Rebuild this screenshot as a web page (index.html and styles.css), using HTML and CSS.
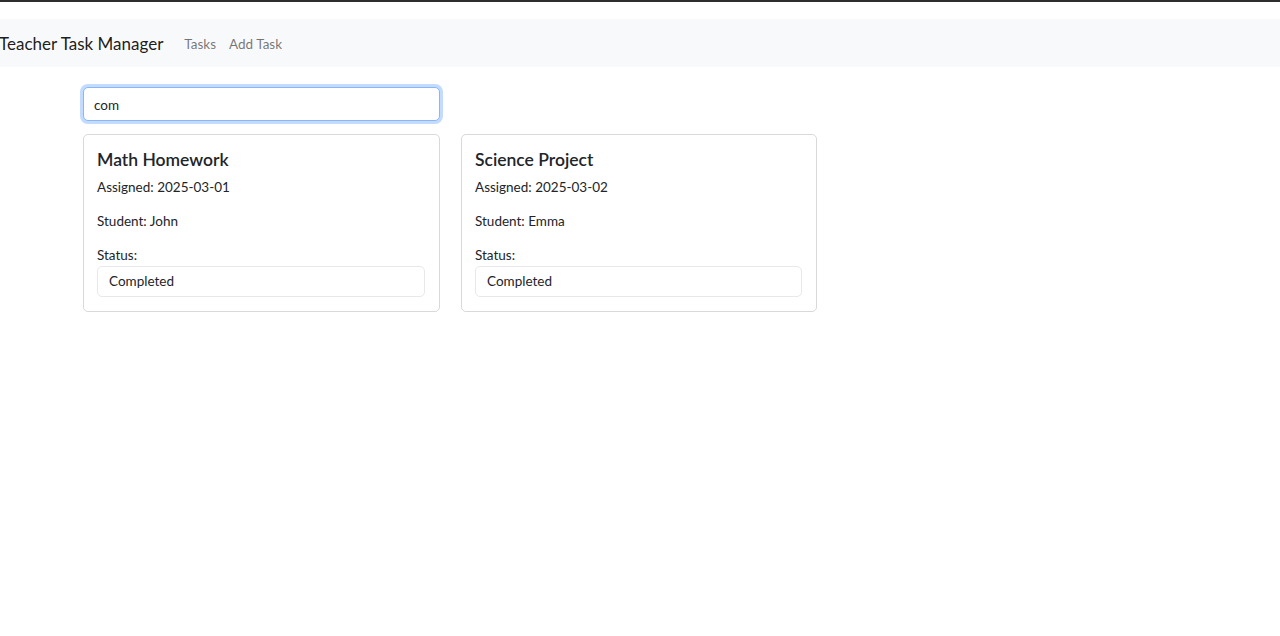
FILE: index.html
```html
<!DOCTYPE html>
<html lang="en">
<head>
<meta charset="utf-8">
<title>Teacher Task Manager</title>
<link rel="stylesheet" href="styles.css">
</head>
<body>
<nav class="navbar">
  <a class="brand" href="#">Teacher Task Manager</a>
  <ul class="nav">
    <li><a class="nav-link" href="#">Tasks</a></li>
    <li><a class="nav-link" href="#">Add Task</a></li>
  </ul>
</nav>
<main class="main">
  <input class="search" type="text" value="com">
  <div class="cards">
    <div class="card">
      <h5 class="card-title">Math Homework</h5>
      <p class="card-text">Assigned: 2025-03-01</p>
      <p class="card-text">Student: John</p>
      <label class="label">Status:</label>
      <div class="status">Completed</div>
    </div>
    <div class="card">
      <h5 class="card-title">Science Project</h5>
      <p class="card-text">Assigned: 2025-03-02</p>
      <p class="card-text">Student: Emma</p>
      <label class="label">Status:</label>
      <div class="status">Completed</div>
    </div>
  </div>
</main>
</body>
</html>
```

FILE: styles.css
```css
* { box-sizing: border-box; }

body {
  margin: 0;
  border-top: 2px solid #2e2e2e;
  font-family: "Lato", "Liberation Sans", sans-serif;
  font-size: 13.5px;
  line-height: 1.5;
  color: #212529;
  background: #fff;
}

.navbar {
  margin-top: 17px;
  height: 48px;
  background: #f8f9fa;
  display: flex;
  align-items: center;
  padding: 0;
}

.brand {
  font-size: 17px;
  line-height: 1.5;
  color: rgba(0, 0, 0, 0.9);
  text-decoration: none;
  margin-left: -1px;
  margin-right: 14px;
  padding-top: 1px;
}

.nav {
  list-style: none;
  margin: 0;
  padding: 0;
  display: flex;
}

.nav-link {
  display: block;
  padding: 9px 7px 7px 7px;
  font-size: 13.5px;
  color: rgba(0, 0, 0, 0.55);
  text-decoration: none;
}

.nav li + li .nav-link {
  padding-left: 6px;
}

.main {
  padding-left: 83px;
  padding-top: 20px;
}

.search {
  display: block;
  width: 357px;
  height: 34px;
  padding: 1px 10px 0 10px;
  font-family: inherit;
  font-size: 13.5px;
  color: #212529;
  border: 1px solid #86b7fe;
  border-radius: 5px;
  box-shadow: 0 0 0 3px rgba(13, 110, 253, 0.25);
  outline: none;
  margin: 0 0 13px 0;
}

.cards {
  display: grid;
  grid-template-columns: 357px 356px;
  gap: 21px;
}

.card {
  border: 1px solid rgba(0, 0, 0, 0.15);
  border-radius: 5px;
  padding: 14px 14px 14px 13px;
}

.card-title {
  margin: 0 0 7px 0;
  font-size: 17.5px;
  font-weight: 600;
  line-height: 1.2;
  color: #212529;
}

.card-text {
  margin: 0 0 14px 0;
  line-height: 20px;
}

.label {
  display: block;
  line-height: 21px;
}

.status {
  height: 31px;
  border: 1px solid #e6e8eb;
  border-radius: 5px;
  padding: 0 10px 0 11px;
  display: flex;
  align-items: center;
  color: #212529;
}
```
